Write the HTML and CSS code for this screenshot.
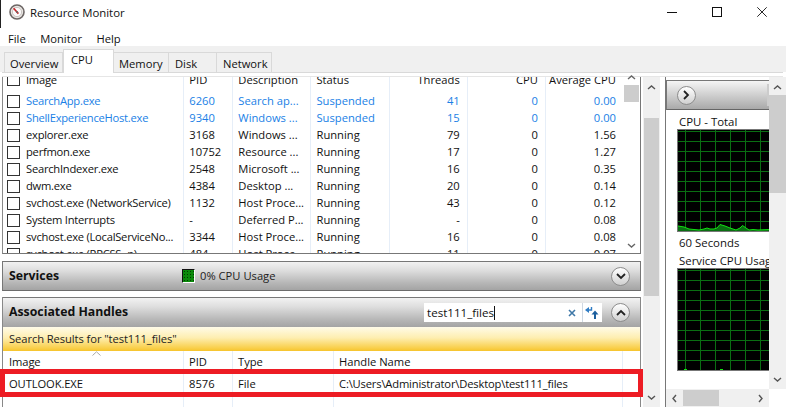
FILE: index.html
```html
<!DOCTYPE html>
<html lang="en">
<head>
<meta charset="utf-8">
<title>Resource Monitor</title>
<link rel="stylesheet" href="styles.css">
</head>
<body>
<div class="window">
  <header class="titlebar">
    <svg class="app-icon" width="16" height="16" viewBox="0 0 16 16"><circle cx="8" cy="8" r="7" fill="#e9e6e3" stroke="#6d6665" stroke-width="1.6"/><circle cx="8" cy="8" r="4.6" fill="#fbfafa" stroke="#b9b2b0" stroke-width=".7"/><path d="M4.6 4.2 9.4 9.6" stroke="#c9252b" stroke-width="1.6"/><circle cx="8" cy="8" r="1.1" fill="#6d6665"/></svg>
    <span class="app-title">Resource Monitor</span>
    <div class="win-controls">
      <svg width="10" height="1" viewBox="0 0 10 1"><path d="M0 .5h10" stroke="#111"/></svg>
      <svg width="10" height="10" viewBox="0 0 10 10"><rect x=".5" y=".5" width="9" height="9" fill="none" stroke="#111"/></svg>
      <svg width="10" height="10" viewBox="0 0 10 10"><path d="M.3.3l9.4 9.4M9.7.3.3 9.7" stroke="#111" stroke-width=".9"/></svg>
    </div>
  </header>
  <nav class="menubar"><span>File</span><span>Monitor</span><span>Help</span></nav>
  <div class="tabs">
    <span class="tab tab-overview">Overview</span>
    <span class="tab tab-active">CPU</span>
    <span class="tab tab-memory">Memory</span>
    <span class="tab tab-disk">Disk</span>
    <span class="tab tab-network">Network</span>
  </div>
  <div class="frame-line"></div>
  <main class="main">
    <section class="left">
      <div class="proc-panel">
        <div class="proc-clip">
          <table class="grid proc-table">
            <colgroup><col class="c-image"><col class="c-pid"><col class="c-desc"><col class="c-status"><col class="c-num"><col class="c-num"><col class="c-num"></colgroup>
            <thead><tr><th class="first"><i class="chk"></i>Image</th><th>PID</th><th>Description</th><th>Status</th><th class="num">Threads</th><th class="num">CPU</th><th class="num">Average CPU</th></tr></thead>
            <tbody>
              <tr class="susp"><td class="first"><i class="chk"></i>SearchApp.exe</td><td>6260</td><td>Search ap...</td><td>Suspended</td><td class="num">41</td><td class="num">0</td><td class="num">0.00</td></tr>
              <tr class="susp"><td class="first"><i class="chk"></i>ShellExperienceHost.exe</td><td>9340</td><td>Windows ...</td><td>Suspended</td><td class="num">15</td><td class="num">0</td><td class="num">0.00</td></tr>
              <tr><td class="first"><i class="chk"></i>explorer.exe</td><td>3168</td><td>Windows ...</td><td>Running</td><td class="num">79</td><td class="num">0</td><td class="num">1.56</td></tr>
              <tr><td class="first"><i class="chk"></i>perfmon.exe</td><td>10752</td><td>Resource ...</td><td>Running</td><td class="num">17</td><td class="num">0</td><td class="num">1.27</td></tr>
              <tr><td class="first"><i class="chk"></i>SearchIndexer.exe</td><td>2548</td><td>Microsoft ...</td><td>Running</td><td class="num">16</td><td class="num">0</td><td class="num">0.35</td></tr>
              <tr><td class="first"><i class="chk"></i>dwm.exe</td><td>4384</td><td>Desktop ...</td><td>Running</td><td class="num">20</td><td class="num">0</td><td class="num">0.14</td></tr>
              <tr><td class="first"><i class="chk"></i>svchost.exe (NetworkService)</td><td>1132</td><td>Host Proce...</td><td>Running</td><td class="num">43</td><td class="num">0</td><td class="num">0.12</td></tr>
              <tr><td class="first"><i class="chk"></i>System Interrupts</td><td>-</td><td>Deferred P...</td><td>Running</td><td class="num">-</td><td class="num">0</td><td class="num">0.08</td></tr>
              <tr><td class="first"><i class="chk"></i>svchost.exe (LocalServiceNo...</td><td>3344</td><td>Host Proce...</td><td>Running</td><td class="num">16</td><td class="num">0</td><td class="num">0.08</td></tr>
              <tr><td class="first"><i class="chk"></i>svchost.exe (RPCSS -p)</td><td>484</td><td>Host Proce...</td><td>Running</td><td class="num">11</td><td class="num">0</td><td class="num">0.07</td></tr>
            </tbody>
          </table>
        </div>
        <div class="vbar inner-bar">
          <svg class="arrow" width="9" height="5" viewBox="0 0 9 5"><path d="M1 4l3.500-3L8 4" fill="none" stroke="#666" stroke-width="1.400"/></svg>
          <div class="thumb inner-thumb"></div>
          <svg class="arrow arrow-end" width="9" height="5" viewBox="0 0 9 5"><path d="M1 1l3.500 3L8 1" fill="none" stroke="#666" stroke-width="1.400"/></svg>
        </div>
      </div>

      <div class="section services">
        <h2>Services</h2>
        <span class="usage"><i class="usage-box"></i>0% CPU Usage</span>
        <span class="round"><svg width="10" height="7" viewBox="0 0 10 7"><path d="M1 1l4 4 4-4" fill="none" stroke="#222" stroke-width="1.800"/></svg></span>
      </div>

      <div class="handles">
        <div class="section">
          <h2>Associated Handles</h2>
          <div class="search">
            <span class="search-text">test111_files</span>
            <svg class="search-x" width="8" height="8" viewBox="0 0 8 8"><path d="M1 1l6 6M7 1 1 7" stroke="#3f78a8" stroke-width="1.600"/></svg>
            <span class="search-sep"></span>
            <svg class="search-go" width="14" height="13" viewBox="0 0 14 13"><path d="M0 4 4 1v6z" fill="#2f7cc4"/><path d="M4 4h2.500V1" fill="none" stroke="#2f7cc4" stroke-width="1.400"/><path d="M10 4.500l3.500 4h-7z" fill="#1c5f9e"/><path d="M10 8v5" stroke="#1c5f9e" stroke-width="2"/></svg>
          </div>
          <span class="round"><svg width="10" height="7" viewBox="0 0 10 7"><path d="M1 6l4-4 4 4" fill="none" stroke="#222" stroke-width="1.800"/></svg></span>
        </div>
        <div class="results-banner">Search Results for "test111_files"</div>
        <div class="results">
          <svg class="sort" width="9" height="5" viewBox="0 0 9 5"><path d="M.5 4.500 4.500.8l4 3.700" fill="none" stroke="#a9a9a9"/></svg>
          <table class="grid handle-table">
            <colgroup><col class="c-image"><col class="c-pid"><col class="c-type"><col class="c-handle"><col></colgroup>
            <thead><tr><th class="plain">Image</th><th>PID</th><th>Type</th><th>Handle Name</th><th></th></tr></thead>
            <tbody>
              <tr><td class="plain">OUTLOOK.EXE</td><td>8576</td><td>File</td><td class="path">C:\Users\Administrator\Desktop\test111_files</td><td></td></tr>
              <tr class="filler"><td></td><td></td><td></td><td></td><td></td></tr>
            </tbody>
          </table>
        </div>
      </div>
      <div class="highlight"></div>
    </section>

    <div class="vbar outer-bar">
      <svg class="arrow" width="9" height="5" viewBox="0 0 9 5"><path d="M1 4l3.500-3L8 4" fill="none" stroke="#555" stroke-width="1.400"/></svg>
      <div class="thumb outer-thumb"></div>
      <svg class="arrow arrow-end" width="9" height="5" viewBox="0 0 9 5"><path d="M1 1l3.500 3L8 1" fill="none" stroke="#555" stroke-width="1.400"/></svg>
    </div>

    <aside class="right">
      <div class="right-top">
        <div class="graphs">
          <div class="graph-head">
            <span class="round round-head"><svg width="7" height="10" viewBox="0 0 7 10"><path d="M1 1l4 4-4 4" fill="none" stroke="#222" stroke-width="1.800"/></svg></span>
            <i class="head-btn"></i>
          </div>
          <div class="graph-label label-first">CPU - Total</div>
          <div class="graph">
            <svg class="spark" width="92" height="9" viewBox="0 0 92 9"><path class="spark-fill" d="M0 4 6 5 11 7 21 8 26 7 29 6 32 7 36 7 39 6 42 2.500 47 4 52 6 58 8 62 6 64.500 3.500 68 6 71 8 75 7.500 80 8 92 7.500V9H0z"/><path class="spark-line" d="M0 4 6 5 11 7 21 8 26 7 29 6 32 7 36 7 39 6 42 2.500 47 4 52 6 58 8 62 6 64.500 3.500 68 6 71 8 75 7.500 80 8 92 7.500"/></svg>
          </div>
          <div class="graph-label label-mid">60 Seconds</div>
          <div class="graph-label label-service">Service CPU Usag</div>
          <div class="graph">
            <svg class="spark" width="92" height="9" viewBox="0 0 92 9"><path class="spark-dot" d="M6 9V8h3v1zM42 9V8h3v1z"/></svg>
          </div>
        </div>
        <div class="vbar right-bar">
          <svg class="arrow" width="9" height="5" viewBox="0 0 9 5"><path d="M1 4l3.500-3L8 4" fill="none" stroke="#555" stroke-width="1.400"/></svg>
          <div class="thumb right-thumb"></div>
          <svg class="arrow arrow-end" width="9" height="5" viewBox="0 0 9 5"><path d="M1 1l3.500 3L8 1" fill="none" stroke="#555" stroke-width="1.400"/></svg>
        </div>
      </div>
      <div class="hbar">
        <svg width="5" height="9" viewBox="0 0 5 9"><path d="M4 1 1 4.500 4 8" fill="none" stroke="#555" stroke-width="1.400"/></svg>
        <div class="thumb h-thumb"></div>
        <svg class="hbar-end" width="5" height="9" viewBox="0 0 5 9"><path d="M1 1l3 3.500L1 8" fill="none" stroke="#555" stroke-width="1.400"/></svg>
      </div>
    </aside>
  </main>
</div>
</body>
</html>
```

FILE: styles.css
```css
* { box-sizing: border-box; }
html, body { margin: 0; padding: 0; background: #fff; }
body { font: 11.2px/15px "Open Sans", "Noto Sans", sans-serif; color: #111; }
.window { width: 786px; height: 407px; overflow: hidden; display: flex; flex-direction: column; background: #fff; }

.titlebar { height: 28px; flex: none; display: flex; align-items: center; padding: 0 0 4px 8px; border-left: 1px solid #222; position: relative; }
.app-icon { margin-right: 5px; }
.app-title { font-size: 11.4px; }
.win-controls { margin-left: auto; display: flex; align-items: center; gap: 35px; padding-right: 19px; }

.menubar { height: 18px; flex: none; display: flex; gap: 14.500px; padding: 2px 0 0 8px; align-items: center; }

.tabs { height: 26px; flex: none; background: #f0f0f0; display: flex; align-items: flex-end; padding-left: 4px; }
.tab { height: 20px; border: 1px solid #d9d9d9; border-left: 0; border-bottom: 0; padding-left: 6px; line-height: 21px; }
.tab-overview { width: 59px; border-left: 1px solid #d9d9d9; padding-left: 5px; }
.tab-active { width: 51px; height: 24px; margin-bottom: -1px; background: #fff; border-left: 1px solid #d9d9d9; padding-left: 7px; line-height: 19px; position: relative; }
.tab-memory { width: 55px; padding-left: 5px; }
.tab-disk { width: 48px; padding-left: 6px; }
.tab-network { width: 55px; padding-left: 6px; }

.frame-line { height: 5px; flex: none; margin: 0 3px 0 2px; border-top: 1px solid #d9d9d9; border-bottom: 1px solid #e6e6e6; background: #fff; }

.main { flex: 1; display: flex; min-height: 0; position: relative; }
.left { width: 639px; margin-left: 2px; flex: none; display: flex; flex-direction: column; }

.proc-panel { height: 177px; flex: none; display: flex; border-right: 1px solid #777; border-bottom: 1px solid #777; border-left: 1px solid #8a8a8a; }
.proc-clip { width: 620px; flex: none; overflow: hidden; }
.proc-table { margin-top: -9px; }

.grid { border-collapse: separate; border-spacing: 0; table-layout: fixed; width: 620px; }
.grid th, .grid td { font-weight: 400; text-align: left; padding: 0 0 0 5px; border-left: 1px solid #e6eef8; white-space: nowrap; overflow: hidden; height: 17px; }
.grid th { height: 24px; padding-bottom: 2px; }
.grid th:first-child, .grid td:first-child { border-left: 0; }
.grid .num { text-align: right; padding: 0 7px 0 0; }
.grid th.num { padding-bottom: 2px; }
.grid .first { padding-left: 23px; position: relative; letter-spacing: -.25px; }
.grid .plain { padding-left: 6px; letter-spacing: -.1px; }
.c-image { width: 180px; }
.c-pid { width: 49px; }
.c-desc { width: 78px; }
.c-status { width: 78px; }
.c-num { width: 78px; }
.c-type { width: 101px; }
.c-handle { width: 289px; }
.chk { position: absolute; left: 4px; top: 50%; margin-top: -6px; width: 13px; height: 13px; border: 1px solid #333; background: #fff; }
th .chk { margin-top: -7px; }
.susp td { color: #1a7fe6; }

.vbar { width: 17px; flex: none; display: flex; flex-direction: column; align-items: center; background: #f0f0f0; position: relative; }
.arrow { flex: none; }
.arrow-end { margin-top: auto; }
.thumb { background: #cdcdcd; flex: none; }
.inner-bar { background: #fff; width: 17px; padding: 0 0 5px; }
.inner-bar .arrow:first-child { margin-top: -2px; }
.inner-thumb { width: 15px; height: 17px; margin-top: 5px; }
.outer-bar { width: 17px; margin-left: 2px; height: 330px; padding: 8px 0 7px; }
.outer-thumb { width: 15px; height: 178px; margin-top: 28px; }

.section { height: 30px; flex: none; display: flex; align-items: center; padding: 0 10px 0 6px; border: 1px solid #777; border-bottom-color: #6b6b6b; background: linear-gradient(#f2f2f2 0%, #dedede 30%, #b6b6b6 75%, #a4a4a4 100%); position: relative; }
.section h2 { margin: 0; font: 700 12.300px/16px "Open Sans", "Noto Sans", sans-serif; color: #111; }
.services { margin-top: 7px; }
.usage { position: absolute; left: 179px; top: 6px; display: flex; align-items: center; gap: 5px; color: #222; }
.usage-box { width: 13px; height: 14px; border: 1px solid; border-color: #111 #fff #fff #111; background: #0a8a0a radial-gradient(#003c00 1px, transparent 1px) 0 0 / 3px 3px; }
.round { width: 19px; height: 19px; margin-left: auto; border-radius: 50%; border: 1px solid #8d8d8d; background: linear-gradient(#fff, #d0d0d0); display: flex; align-items: center; justify-content: center; flex: none; }

.handles { margin-top: 6px; flex: 1; display: flex; flex-direction: column; border-left: 1px solid #888; border-right: 1px solid #888; }
.handles .section { border-left: 0; border-right: 0; border-bottom: 0; padding-left: 6px; }
.handles .section h2 { padding-bottom: 2px; }
.search { width: 178px; height: 19px; margin-left: auto; background: #fff; display: flex; align-items: center; padding-left: 3px; font-size: 11.600px; }
.search + .round { margin-left: 9px; }
.search-text { border-right: 1px solid #111; line-height: 14px; }
.search-x { margin-left: auto; }
.search-sep { width: 1px; height: 19px; background: #cfd8e2; margin-left: 6px; }
.search-go { margin: 0 3px 0 2px; }

.results-banner { height: 24px; flex: none; padding-left: 6px; line-height: 23px; letter-spacing: -.08px; background: linear-gradient(#fffbe8 0%, #feeeb0 45%, #f9cf4a 88%, #f6c42c 100%); color: #222; }
.results { flex: 1; position: relative; overflow: hidden; }
.sort { position: absolute; left: 89px; top: 0; }
.handle-table th { height: 23px; }
.handle-table .filler td { height: 40px; padding: 0; }
.handle-table td { height: 20px; padding-bottom: 2px; }
.handle-table { width: 637px; }
.path { letter-spacing: -.17px; }

.highlight { position: absolute; left: 0; top: 292px; width: 643px; height: 28px; border: 5px solid #ed1c24; pointer-events: none; }

.right { flex: none; width: 121px; margin-left: 5px; display: flex; flex-direction: column; border-left: 1px solid #777; height: 330px; position: relative; }
.right-top { display: flex; height: 312px; }
.graphs { width: 103px; flex: none; padding-top: 3px; overflow: hidden; }
.graph-head { height: 30px; border: 1px solid #777; border-right: 0; border-bottom: 1px solid #666; background: linear-gradient(#f5f5f5, #a9a9a9); display: flex; align-items: center; padding-left: 10px; position: relative; }
.graph-head .round { margin-left: 0; }
.head-btn { position: absolute; right: 0; top: 3px; width: 2px; height: 22px; background: #f5f5f5; border: 1px solid #ccc; }
.graph-label { margin-left: 13px; height: 18px; line-height: 21px; white-space: nowrap; font-size: 11.400px; }
.label-first { margin-top: 1px; }
.graph { margin-left: 11px; height: 103px; width: 92px; border: 1px solid #777; border-width: 1px 0 1px 1px; position: relative; background-color: #000;
  background-image: linear-gradient(#0a6e12 1px, transparent 1px), linear-gradient(90deg, #0a6e12 1px, transparent 1px);
  background-size: 15px 10px; background-position: 7px 1px; }
.spark { position: absolute; left: 0; bottom: 0; display: block; }
.spark-fill { fill: #0a6e12; }
.spark-line { fill: none; stroke: #12e012; stroke-width: 1; }
.spark-dot { fill: #12e012; }
.right-bar { height: 312px; padding: 8px 0 7px; }
.right-thumb { width: 17px; height: 98px; margin-top: 5px; }
.hbar { height: 18px; width: 103px; background: #f0f0f0; display: flex; align-items: center; padding: 0 6px; }
.h-thumb { width: 36px; height: 16px; margin-left: 6px; }
.hbar-end { margin-left: auto; }
```
